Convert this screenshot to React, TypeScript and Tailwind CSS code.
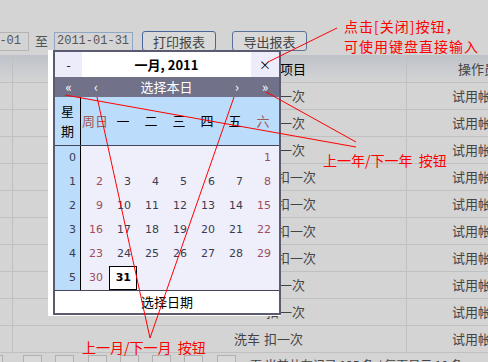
const cjk = "font-['SimSun','Noto_Sans_CJK_SC',sans-serif]"

const rows = [
  { pre: "", w: 266 },
  { pre: "", w: 266 },
  { pre: "", w: 266 },
  { pre: "储值卡", w: 277 },
  { pre: "储值卡", w: 277 },
  { pre: "储值卡", w: 277 },
  { pre: "会员计", w: 277 },
  { pre: "", w: 266 },
  { pre: "", w: 266 },
  { pre: "洗车", w: 264 },
]

const weeks = [
  ["", "", "", "", "", "", "1"],
  ["2", "3", "4", "5", "6", "7", "8"],
  ["9", "10", "11", "12", "13", "14", "15"],
  ["16", "17", "18", "19", "20", "21", "22"],
  ["23", "24", "25", "26", "27", "28", "29"],
  ["30", "31", "", "", "", "", ""],
]

const dayNames = ["周日", "一", "二", "三", "四", "五", "六"]

function Calendar() {
  return (
    <div className="absolute left-[48px] top-[50px] w-[233px] h-[266px] bg-white">
      <div className="ml-[5px] w-[228px] h-[265px] border-2 border-[#5a5a70] flex flex-col">
        {/* title */}
        <div className="flex h-[25px] items-center bg-white">
          <div className="w-[27px] h-full bg-[#ececfb] flex items-center justify-center text-[12px] text-black">-</div>
          <div className={`flex-1 text-center text-[13px] font-bold text-black ${cjk}`}>一月, 2011</div>
          <div className="w-[28px] h-full bg-[#ececfb] flex items-center justify-center text-[12px] text-black">×</div>
        </div>
        {/* nav */}
        <div className={`flex h-[20px] items-center bg-[#71718a] text-white text-[13px] ${cjk}`}>
          <div className="w-[27px] text-center">«</div>
          <div className="w-[28px] text-center">‹</div>
          <div className="flex-1 text-center text-[13px]">选择本日</div>
          <div className="w-[28px] text-center">›</div>
          <div className="w-[28px] text-center">»</div>
        </div>
        {/* week header */}
        <div className={`flex h-[49px] bg-[#bbdcfa] border-b border-[#45455a] ${cjk} text-[13px]`}>
          <div className="w-[26px] border-r border-black flex flex-col items-center justify-center leading-[20px] text-black">
            <span>星</span>
            <span>期</span>
          </div>
          {dayNames.map((d, i) => (
            <div
              key={d}
              className={`w-[28px] flex items-center justify-center ${i === 0 || i === 6 ? "text-[#a05a5a]" : "text-black"}`}
            >
              {d}
            </div>
          ))}
        </div>
        {/* days */}
        <div className="flex font-['DejaVu_Sans',sans-serif] text-[11px]">
          <div className="w-[26px] bg-[#bbdcfa] border-r border-black text-[#3c3c50]">
            {weeks.map((_, i) => (
              <div key={i} className="h-[24px] flex items-center justify-end pr-[4px]">{i}</div>
            ))}
          </div>
          <div className="flex-1 bg-[#efeffb]">
            {weeks.map((w, i) => (
              <div key={i} className="flex h-[24px]">
                {w.map((d, j) =>
                  d === "31" ? (
                    <div key={j} className="w-[28px] h-[24px] bg-white border border-black flex items-center justify-end pr-[5px] font-bold text-black">
                      31
                    </div>
                  ) : (
                    <div
                      key={j}
                      className={`w-[28px] flex items-center justify-end pr-[6px] ${j === 0 || j === 6 ? "text-[#a04c5c]" : "text-[#3c3c50]"}`}
                    >
                      {d}
                    </div>
                  )
                )}
              </div>
            ))}
          </div>
        </div>
        {/* footer */}
        <div className={`flex-1 bg-white border-t border-[#45455a] flex items-center justify-center text-[13px] text-black ${cjk}`}>
          选择日期
        </div>
      </div>
    </div>
  )
}

export default function App() {
  return (
    <div className={`relative w-[488px] h-[362px] overflow-hidden bg-[#d4d4d4] text-[#444] ${cjk}`}>
      {/* toolbar */}
      <div className="h-[31px]" />
      <div className="flex items-center h-[20px] text-[13px]">
        <div className="w-[29px] h-[19px] border border-l-0 border-[#b4b4b4] flex items-center justify-end pr-[7px] font-['Liberation_Mono',monospace] text-[12px] text-[#555]">
          -01
        </div>
        <span className="ml-[6px] text-[#555]">至</span>
        <div className="ml-[6px] w-[79px] h-[19px] border border-[#8ea6c8] flex items-center pl-[2px] font-['Liberation_Mono',monospace] text-[12px] text-[#555]">
          2011-01-31
        </div>
        <button className="ml-[9px] w-[74px] h-[20px] rounded-[3px] border border-[#47679a] bg-[#d9d9d9] text-[13px] text-[#444]">
          打印报表
        </button>
        <button className="ml-[16px] w-[75px] h-[20px] rounded-[3px] border border-[#5a7297] bg-[#d9d9d9] text-[13px] text-[#444]">
          导出报表
        </button>
      </div>

      {/* table */}
      <div className="mt-[4px] text-[13px]">
        <div className="flex h-[28px] bg-gradient-to-b from-[#bec2ca] to-[#d4d4d4] border-b border-[#c0c0c0]">
          <div className="w-[13px] shrink-0 border-r border-[#c0c0c0]" />
          <div className="w-[394px] shrink-0 border-r border-[#c0c0c0] flex items-center pl-[267px] text-black">项目</div>
          <div className="flex-1 min-w-0 flex items-center pl-[51px] whitespace-nowrap">操作员</div>
        </div>
        {rows.map((r, i) => (
          <div key={i} className="flex h-[27px] border-b border-[#c0c0c0]">
            <div className="w-[13px] shrink-0 border-r border-[#c0c0c0]" />
            <div className="w-[394px] shrink-0 border-r border-[#c0c0c0] flex items-center whitespace-nowrap">
              <span className="shrink-0 text-right pr-[4px]" style={{ width: r.w - 13 }}>
                {r.pre}
              </span>
              <span>扣一次</span>
            </div>
            <div className="flex-1 min-w-0 flex items-center pl-[45px] whitespace-nowrap">试用帐号</div>
          </div>
        ))}
        {/* pagination */}
        <div className="flex items-start h-[10px] pt-[2px] text-[12px]">
          {[0, 23, 55, 88, 120, 152, 184, 217].map((x, i) => (
            <div
              key={i}
              className="absolute top-[355px] h-[12px] w-[19px] border border-[#b0b0b0] bg-[#d8d8d8]"
              style={{ left: x - (i === 0 ? 16 : 0) }}
            />
          ))}
          <span className="absolute left-[250px] top-[356px] whitespace-nowrap">页 当前共有记录 135 条 / 每页显示 10 条</span>
        </div>
      </div>

      <Calendar />

      {/* annotations */}
      <svg className="absolute left-0 top-0 pointer-events-none" width="488" height="362">
        <g stroke="#ff0000" strokeWidth="1">
          <line x1="268" y1="62" x2="337" y2="28" />
          <line x1="65" y1="95" x2="356" y2="147" />
          <line x1="266" y1="92" x2="356" y2="142" />
          <line x1="97" y1="97" x2="150" y2="338" />
          <line x1="234" y1="97" x2="150" y2="338" />
        </g>
      </svg>
      <div className="absolute left-[344px] top-[18px] text-[14px] leading-[16px] text-[#ff0000] tracking-[1px] whitespace-nowrap">
        点击[关闭]按钮，
      </div>
      <div className="absolute left-[344px] top-[38px] text-[14px] leading-[16px] text-[#ff0000] tracking-[1px] whitespace-nowrap">
        可使用键盘直接输入
      </div>
      <div className="absolute left-[323px] top-[152px] text-[14px] leading-[16px] text-[#ff0000] whitespace-nowrap">
        上一年/下一年&nbsp;&nbsp;按钮
      </div>
      <div className="absolute left-[82px] top-[339px] text-[14px] leading-[16px] text-[#ff0000] whitespace-nowrap">
        上一月/下一月&nbsp;&nbsp;按钮
      </div>
    </div>
  )
}
